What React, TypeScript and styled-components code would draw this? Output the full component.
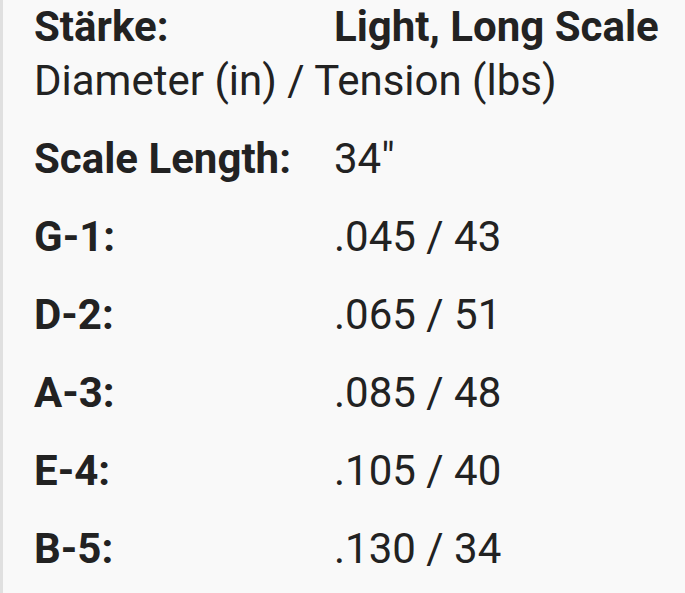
import React from "react";
import styled, { createGlobalStyle } from "styled-components";

const Global = createGlobalStyle`
  html, body { margin: 0; padding: 0; background: #f9f9f9; }
  body { font-family: Roboto, "Noto Sans", sans-serif; color: #222222; }
`;

const Panel = styled.div`
  box-sizing: border-box;
  width: 685px;
  height: 593px;
  border-left: 3px solid #e0e0e0;
  padding-left: 31px;
  background: #f9f9f9;
  overflow: hidden;
`;

const Row = styled.div<{ $pad?: number }>`
  display: grid;
  grid-template-columns: 300px 1fr;
  font-size: 42px;
  line-height: 54px;
  padding: ${(p) => p.$pad ?? 12}px 0;
  white-space: nowrap;
`;

const Label = styled.div`
  font-weight: 700;
`;

const Value = styled.div<{ $bold?: boolean }>`
  font-weight: ${(p) => (p.$bold ? 700 : 400)};
`;

const Caption = styled.div`
  font-size: 42px;
  line-height: 54px;
  margin-bottom: 12px;
  white-space: nowrap;
`;

const rows: [string, string][] = [
  ["Scale Length:", "34\""],
  ["G-1:", ".045 / 43"],
  ["D-2:", ".065 / 51"],
  ["A-3:", ".085 / 48"],
  ["E-4:", ".105 / 40"],
  ["B-5:", ".130 / 34"],
];

export default function App() {
  return (
    <>
      <Global />
      <Panel>
        <Row $pad={0}>
          <Label>Stärke:</Label>
          <Value $bold>Light, Long Scale</Value>
        </Row>
        <Caption>Diameter (in) / Tension (lbs)</Caption>
        {rows.map(([l, v]) => (
          <Row key={l}>
            <Label>{l}</Label>
            <Value>{v}</Value>
          </Row>
        ))}
      </Panel>
    </>
  );
}
